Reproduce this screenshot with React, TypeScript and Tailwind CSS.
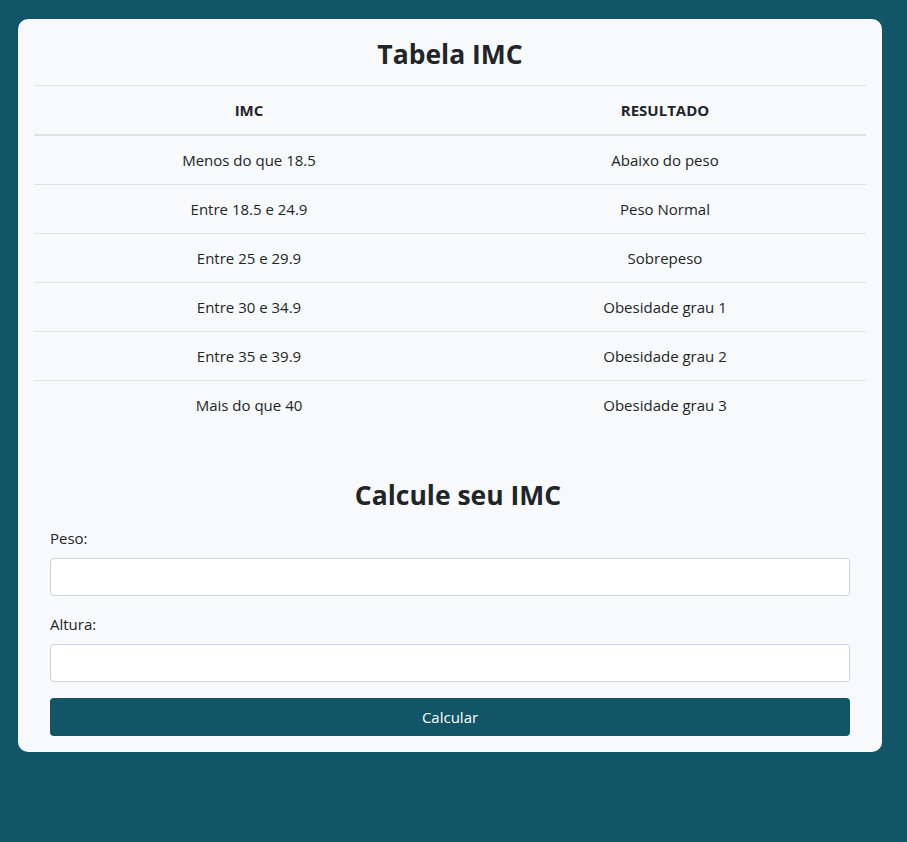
import React from "react";

const rows: [string, string][] = [
  ["Menos do que 18.5", "Abaixo do peso"],
  ["Entre 18.5 e 24.9", "Peso Normal"],
  ["Entre 25 e 29.9", "Sobrepeso"],
  ["Entre 30 e 34.9", "Obesidade grau 1"],
  ["Entre 35 e 39.9", "Obesidade grau 2"],
  ["Mais do que 40", "Obesidade grau 3"],
];

export default function App() {
  return (
    <div
      className="min-h-[842px] w-full bg-[#115566] pt-[19px] pl-[18px] text-[#212529]"
      style={{ fontFamily: '"Open Sans", "Noto Sans", sans-serif' }}
    >
      <div className="w-[864px] rounded-[10px] bg-[#f8f9fa] p-4">
        <h2 className="mt-[2px] mb-[14px] text-center text-[26.5px] font-bold leading-[34px]">Tabela IMC</h2>
        <div className="border-t border-[#dee2e6]">
          <div className="grid grid-cols-[430px_1fr] border-b-2 border-[#dee2e6] text-center text-[15px] font-bold">
            <div className="py-3 leading-6">IMC</div>
            <div className="py-3 leading-6">RESULTADO</div>
          </div>
          {rows.map(([a, b], i) => (
            <div
              key={a}
              className={`grid grid-cols-[430px_1fr] text-center text-[15px] ${
                i < rows.length - 1 ? "border-b border-[#dee2e6]" : ""
              }`}
            >
              <div className="py-3 leading-6">{a}</div>
              <div className="py-3 leading-6">{b}</div>
            </div>
          ))}
        </div>
        <div className="px-4 pt-[49px]">
          <h2 className="mb-[14px] pl-4 text-center text-[26.5px] font-bold leading-[34px]">Calcule seu IMC</h2>
          <div className="mb-4">
            <label className="mb-2 block text-[15px] leading-6">Peso:</label>
            <input
              type="text"
              className="block h-[38px] w-full rounded-[4px] border border-[#ced4da] bg-white px-3"
            />
          </div>
          <div className="mb-4">
            <label className="mb-2 block text-[15px] leading-6">Altura:</label>
            <input
              type="text"
              className="block h-[38px] w-full rounded-[4px] border border-[#ced4da] bg-white px-3"
            />
          </div>
          <button className="block h-[38px] w-full rounded-[4px] bg-[#115566] text-[15px] text-white">
            Calcular
          </button>
        </div>
      </div>
    </div>
  );
}
